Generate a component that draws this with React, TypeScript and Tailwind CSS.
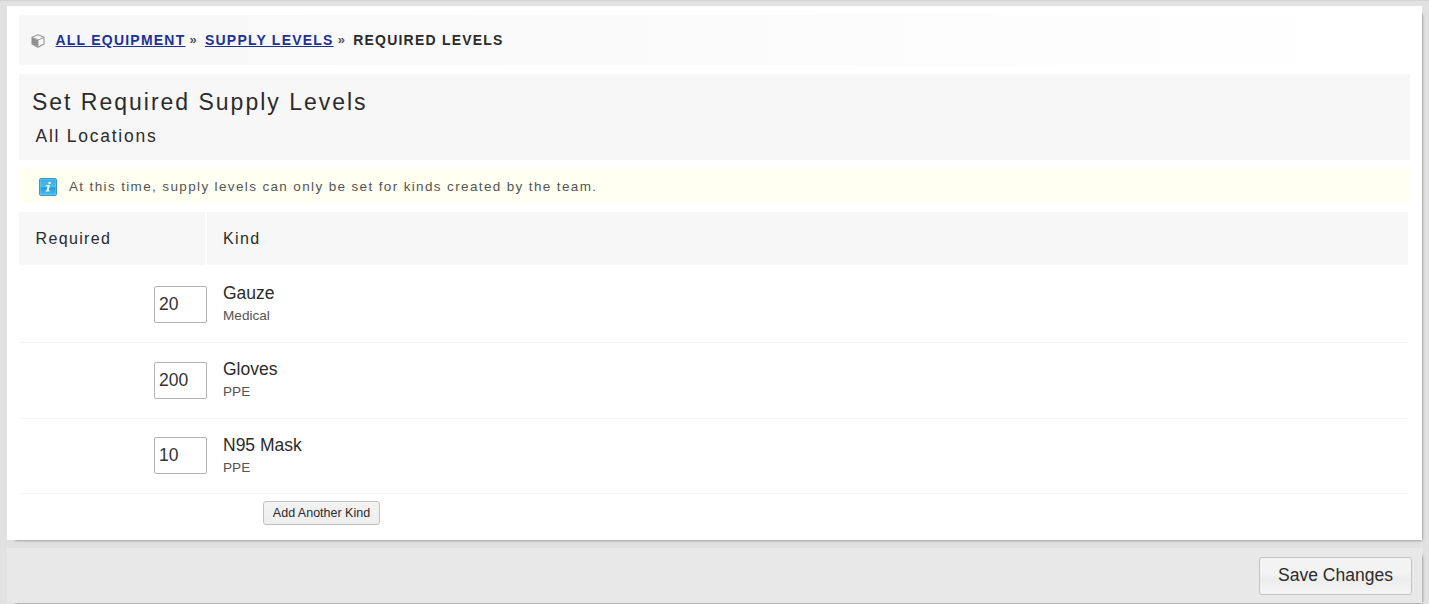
const rows = [
  { qty: "20", name: "Gauze", group: "Medical", box: "h-[78px] pt-[17px]", input: "mt-1" },
  { qty: "200", name: "Gloves", group: "PPE", box: "h-[76px] pt-[15px]", input: "mt-1" },
  { qty: "10", name: "N95 Mask", group: "PPE", box: "h-[75px] pt-[15px]", input: "mt-[3px]" },
];

function CubeIcon() {
  return (
    <svg width="14" height="14" viewBox="0 0 14 14" className="mt-[2px] shrink-0">
      <path d="M7 .8 13 3.2v6.9L7 13.2 1 10.1V3.2Z" fill="#f7f7f7" stroke="#999" strokeWidth="1.1" strokeLinejoin="round" />
      <path d="M1 3.4 7 6v7.2l-6-3.1Z" fill="#909090" />
      <path d="M1 3.4 7 6l6-2.6M7 6v7" fill="none" stroke="#999" />
    </svg>
  );
}

function InfoIcon() {
  return (
    <svg width="20" height="20" viewBox="0 0 20 20" className="mt-[2px] shrink-0">
      <defs>
        <linearGradient id="info" x2="0" y2="1">
          <stop offset="0" stopColor="#3ba9e4" />
          <stop offset=".48" stopColor="#49bceb" />
          <stop offset=".55" stopColor="#249bdc" />
          <stop offset="1" stopColor="#48c3ef" />
        </linearGradient>
      </defs>
      <rect x="1.5" y="1.5" width="17" height="17" rx="1.5" fill="url(#info)" stroke="#4295c2" />
      <path d="M2.5 17.5v-15h15v15Z" fill="none" stroke="#8ad8f5" strokeOpacity=".35" />
      <path d="M8 8h4l-1.3 5h1l-.3 1.4H7.6l.3-1.2h.7l1-3.9H7.7Z" fill="#f4fcff" />
      <circle cx="11.6" cy="5.9" r="1.2" fill="#f4fcff" />
    </svg>
  );
}

const shadow = "shadow-[4px_4px_3px_-4px_rgba(0,0,0,0.5)]";

export default function App() {
  return (
    <div className="h-[604px] overflow-hidden border-t border-[#d3d3d3] bg-[#e1e1e1] px-[7px] pt-[5px] font-['Liberation_Sans',Arial,sans-serif] text-[#2b2b2b]">
      <main className={"h-[534px] bg-white px-3 pt-[9px] " + shadow}>
        <nav className="flex h-[50px] items-center bg-linear-to-r from-[#f7f7f7] to-white pl-3 text-[14px] font-bold whitespace-pre">
          <CubeIcon />
          <a href="#" className="ml-[10.5px] tracking-[1.22px] text-[#20309a] underline">ALL EQUIPMENT</a>
          <span className="ml-[4px] w-[15.5px] text-[13px] text-[#555]">»</span>
          <a href="#" className="tracking-[1.22px] text-[#20309a] underline">SUPPLY LEVELS</a>
          <span className="ml-[4px] w-[15.5px] text-[13px] text-[#555]">»</span>
          <span className="tracking-[1.22px]">REQUIRED LEVELS</span>
        </nav>

        <header className="mt-[9px] h-[86px] bg-[#f7f7f7] pt-[14px] pl-[13px]">
          <h1 className="text-[23px] leading-[28px] tracking-[1.99px]">Set Required Supply Levels</h1>
          <h2 className="mt-2 ml-[3.5px] text-[17.5px] leading-6 tracking-[1.75px]">All Locations</h2>
        </header>

        <div className="mt-2 flex h-[35px] items-center bg-[#fffff2] pl-[19px] text-[13.5px] tracking-[1.36px] text-[#555]">
          <InfoIcon />
          <p className="mt-[3px] ml-[11px]">At this time, supply levels can only be set for kinds created by the team.</p>
        </div>

        <section className="mt-[9px] mr-[2px]">
          <div className="flex h-[53px] gap-[2px] text-[16px] leading-[53px] tracking-[1.35px]">
            <div className="w-[186px] bg-[#f7f7f7] pl-[16.5px]">Required</div>
            <div className="flex-1 bg-[#f7f7f7] pl-4">Kind</div>
          </div>
          {rows.map((r) => (
            <div key={r.name} className={"flex border-b border-[#f3f3f3] " + r.box}>
              <input
                defaultValue={r.qty}
                className={"ml-[135px] h-[37px] w-[53px] rounded-[2px] border border-[#b3b3b3] bg-white pl-1 text-[17.5px] text-[#333] " + r.input}
              />
              <div className="ml-4">
                <div className="text-[17.5px] leading-[22px]">{r.name}</div>
                <div className="text-[13.6px] leading-6 text-[#555]">{r.group}</div>
              </div>
            </div>
          ))}
          <button className="mt-[7px] ml-[244px] flex h-6 w-[117px] items-center justify-center rounded-[3px] border border-[#c0c0c0] bg-linear-to-b from-[#f3f3f3] to-[#eee] text-[12.5px] whitespace-nowrap">
            Add Another Kind
          </button>
        </section>
      </main>

      <footer className={"mt-[8px] flex h-[55px] justify-end bg-[#e8e8e8] pt-[9px] pr-[10px] " + shadow}>
        <button className="flex h-[38px] w-[153px] items-center justify-center rounded-[3px] border border-[#c3c3c3] bg-linear-to-b from-[#f3f3f3] from-40% via-[#ededed] via-60% to-[#f4f4f4] pb-[2px] text-[17.5px]">
          Save Changes
        </button>
      </footer>
    </div>
  );
}
